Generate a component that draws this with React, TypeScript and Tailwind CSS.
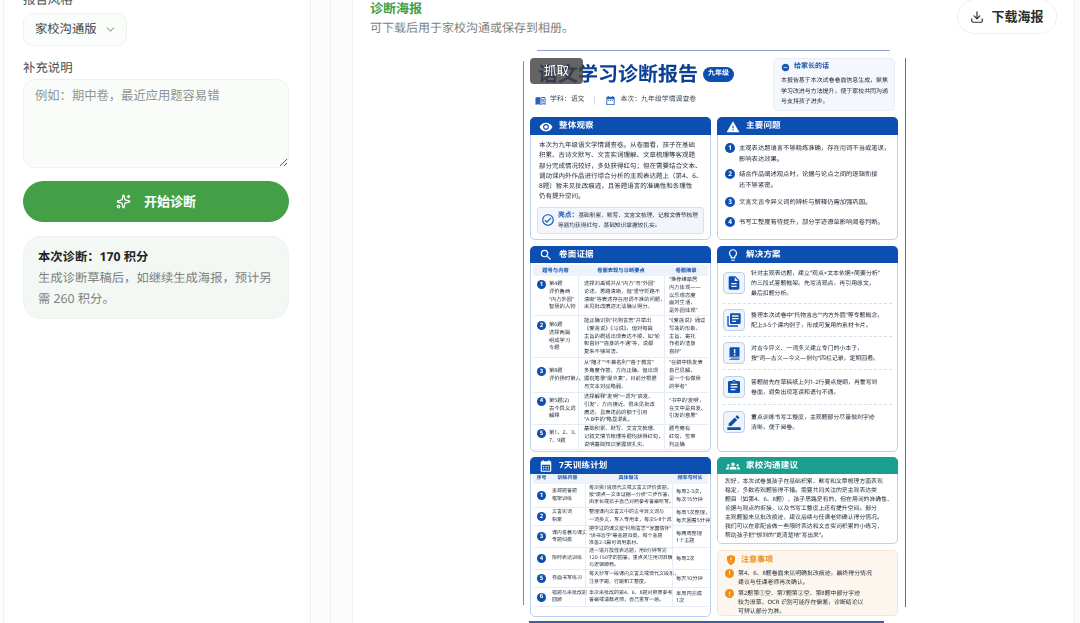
import { ChevronDown, Download, Sparkles } from "lucide-react";
import {
  MdAssignment,
  MdBorderColor,
  MdCalendarMonth,
  MdDateRange,
  MdDescription,
  MdGppMaybe,
  MdGroups,
  MdLibraryBooks,
  MdOutlineCheckCircle,
  MdOutlineLightbulb,
  MdOutlineMenuBook,
  MdRemoveCircle,
  MdSearch,
  MdVisibility,
  MdWarning,
} from "react-icons/md";
import type { ReactNode } from "react";

const evidenceRows = [
  { h: "h-[40px]", topic: "第4题\n评价鲁两\n“内方外圆”\n智慧的人物", note: "选择刘禹锡并从“内方”与“外圆”\n论述，思路清晰，但“坚守贬路不\n清晰”等表述存在用词不准的问题，\n未见批改痕迹无法确认得分。", quote: "“推荐维摩居\n内方体现——\n以乐观态度\n面对生活，\n是外圆体现”" },
  { h: "h-[42px]", topic: "第6题\n选择两篇\n组成学习\n专题", note: "能正确识别“托物言志”并举出\n《爱莲说》《马说》，但对每篇\n主旨的概括出现表达不顺，如“轮\n彰自好”“自身的不遇”等，说都\n复朱不够简洁。", quote: "“《爱莲说》通过\n写莲的形象，\n主旨，寄托\n作者的洁身\n自好”" },
  { h: "h-[35px]", topic: "第8题\n评价扬时第人", note: "从“隐才”“不慕名利”“善于教言”\n多角度作答，方向正确。但出现\n握祝笔录“提炎素”，目前分根据\n与文本对应略弱。", quote: "“在鲜中桃发表\n自己见解，\n是一个有做骨\n的学者”" },
  { h: "h-[32px]", topic: "第5题(2)\n古今异义词\n解释", note: "选择解释“发明”一词为“启发、\n引发”，方向接近。很未见批改\n痕迹，且表述前的额于引用\n“A B中的”略显混乱。", quote: "“书中的‘发明’，\n在文中是启发、\n引发的意思”" },
  { h: "h-[25px]", topic: "第1、2、3、\n7、9题", note: "基础积累、默写、文言文梳理、\n记叙文情节梳理等题均获得红勾，\n说明基础知识掌握较扎实。", quote: "题号旁有\n红勾，签章\n判正确" },
];

const planRows = [
  { h: "h-[24px]", name: "主观题答题\n框架训练", how: "每次挑1道现代文或文言文评价类题，\n按“观点—文本证据—分析”三步作答，\n由家长或孩子自己对照参考答案听写。", freq: "每周2-3次，\n每次15分钟" },
  { h: "h-[18px]", name: "文言实词\n积累", how: "整理课内文言文中的古今异义词与\n一词多义，写入专用本，每次5-8个词。", freq: "每周1次整理，\n每天回看5分钟" },
  { h: "h-[22px]", name: "课内名著与课文\n专题归类", how: "把学过的课文按“托物言志”“家国情怀”\n“读书治学”等主题归类，每个主题\n准备2-3篇可调用素材。", freq: "每两周整理\n1个主题" },
  { h: "h-[22px]", name: "限时表达训练", how: "选一道开放性表达题，用8分钟写完\n120-150字的回答，重点关注用词准确\n与逻辑顺畅。", freq: "每周2次" },
  { h: "h-[18px]", name: "卷面书写练习", how: "每天抄写一段课内文言文或现代文段落，\n注意字距、行距和工整度。", freq: "每天10分钟" },
  { h: "h-[19px]", name: "错题与未批改题\n回顾", how: "本次未批改的第4、6、8题对照原参考\n答案或请教老师，自己重写一遍。", freq: "本周内完成\n1次" },
];

const problems = [
  { h: "h-[26px]", text: "主观表达题语言不够精炼准确，存在用词不当或笔误，\n影响表达效果。" },
  { h: "h-[28px]", text: "结合作品阐述观点时，论据与论点之间的逻辑衔接\n还不够紧密。" },
  { h: "h-[20px]", text: "文言文古今异义词的辨析与解释仍需加强巩固。" },
  { h: "h-[20px]", text: "书写工整度有待提升，部分字迹潦草影响阅卷判断。" },
];

function BookAlert() {
  return (
    <svg viewBox="0 0 24 24" className="w-[15px] h-[15px]" fill="currentColor">
      <path d="M6 2h14v15H6.5A2.5 2.5 0 0 0 4 19.5V4a2 2 0 0 1 2-2z" />
      <path d="M6.5 18.5H20V20H6.5a.75.75 0 0 1 0-1.5z" />
      <rect x="11" y="5" width="2.4" height="6.5" fill="#eff4fc" />
      <rect x="11" y="13" width="2.4" height="2.4" fill="#eff4fc" />
      <rect x="4" y="21" width="16" height="1.2" />
    </svg>
  );
}

const solutions = [
  { icon: <MdDescription />, h: "h-[41px]", text: "针对主观表达题，建立“观点+文本依据+简要分析”\n的三段式答题框架。先写清观点，再引用原文，\n最后扣题分析。" },
  { icon: <MdLibraryBooks />, h: "h-[33px]", text: "整理本次试卷中“托物言志”“内方外圆”等专题概念，\n配上3-5个课内例子，形成可复用的素材卡片。" },
  { icon: <BookAlert />, h: "h-[33px]", text: "对古今异义、一词多义建立专门的小本子，\n按“词—古义—今义—例句”四栏记录，定期回看。" },
  { icon: <MdAssignment />, h: "h-[35px]", text: "答题前先在草稿纸上列1-2行要点提纲，再誊写到\n卷面，避免出现笔误和语句不通。" },
  { icon: <MdBorderColor />, h: "h-[34px]", text: "重点训练书写工整度，主观题部分尽量做到字迹\n清晰，便于阅卷。" },
];

function Num({ n, size = "w-[10px] h-[10px] text-[6.5px]" }: { n: number; size?: string }) {
  return (
    <span className={`${size} shrink-0 rounded-full bg-[#0d4fb0] text-white font-bold flex items-center justify-center`}>
      {n}
    </span>
  );
}

function CardHead({ icon, title, color = "bg-[#0d4fb0]", h = "h-[17px]" }: { icon: ReactNode; title: string; color?: string; h?: string }) {
  return (
    <div className={`${color} ${h} -mx-px -mt-px box-content pt-px rounded-t-[5px] flex items-center gap-[6px] pl-[9px] text-white`}>
      <span className="text-[14px] w-[14px] flex justify-center">{icon}</span>
      <span className="text-[8.5px] font-bold tracking-[0.2px]">{title}</span>
    </div>
  );
}

function Poster() {
  return (
    <div className="relative w-[383px] h-[573px] shrink-0 blur-[0.3px]">
      <div className="h-full bg-white border border-t-[#8fa5cc] border-b-2 border-b-[#3f5f96] border-l-[#6f8dc2] border-r-[#4f74b2] overflow-hidden text-[#1f2937]">
        {/* 头部 */}
        <div className="h-[66px] flex pl-[14px] pr-[10px]">
          <div className="flex-1 pt-[10px]">
            <div className="flex items-center gap-[5px] h-[26px]">
              <span className="text-[20px] font-bold text-[#0b3f94] leading-none">语文学习诊断报告</span>
              <span className="h-[15px] px-[5px] rounded-full bg-[#0d4fb0] text-white text-[7px] font-bold flex items-center">九年级</span>
            </div>
            <div className="mt-[7px] -ml-[3px] flex items-center h-[12px] text-[6.9px] text-[#3c4656]">
              <MdOutlineMenuBook className="text-[#2a63b8] text-[11px] mr-[4px]" />
              <span>学科：语文</span>
              <span className="w-px h-[9px] bg-[#d7dfeb] mx-[10px]" />
              <MdDateRange className="text-[#2a63b8] text-[11px] mr-[4px]" />
              <span>本次：九年级学情调查卷</span>
            </div>
          </div>
          <div className="w-[122px] h-[53px] mt-[7px] rounded-[5px] bg-[#f4f7fc] border border-[#e8eef7] px-[7px] pt-[3px]">
            <div className="flex items-center gap-[2px] text-[7px] font-bold text-[#1a56ad] h-[11px]">
              <MdRemoveCircle className="text-[9px]" />
              <span className="ml-[2px]">给家长的话</span>
            </div>
            <p className="text-[5.95px] leading-[10.5px] mt-[2px] whitespace-pre">{"本报告基于本次试卷卷面信息生成，聚焦\n学习改进与方法提升，便于家校共同沟通\n与支持孩子进步。"}</p>
          </div>
        </div>

        <div className="grid grid-cols-[181px_181px] gap-x-[6px] px-[6px]">
          {/* 左列 */}
          <div className="flex flex-col">
            <section className="h-[123px] rounded-[5px] border border-[#bcd0ec]">
              <CardHead icon={<MdVisibility />} title="整体观察" />
              <p className="text-[6.5px] leading-[10.3px] pl-[8px] pt-[5px] whitespace-pre">{"本次为九年级语文学情调查卷。从卷面看，孩子在基础\n积累、古诗文默写、文言实词理解、文章梳理等客观题\n部分完成情况较好，多处获得红勾；但在需要结合文本、\n调动课内外作品进行综合分析的主观表达题上（第4、6、\n8题）暂未见批改痕迹，且答题语言的准确性和条理性\n仍有提升空间。"}</p>
              <div className="mx-[6px] mt-[5px] h-[27px] rounded-[3px] bg-[#f2f6fc] border border-[#d4e1f3] flex items-center gap-[3px] pl-[3px]">
                <MdOutlineCheckCircle className="text-[#1a56ad] text-[14px] shrink-0" />
                <p className="text-[5.7px] leading-[10px] whitespace-pre"><b className="text-[#1a56ad] text-[6.8px]">亮点：</b>{"基础积累、默写、文言文梳理、记叙文情节梳理\n等题均获得红勾，基础知识掌握较扎实。"}</p>
              </div>
            </section>

            <section className="mt-[6px] h-[206px] rounded-[5px] border border-[#bcd0ec]">
              <CardHead icon={<MdSearch />} title="卷面证据" h="h-[16px]" />
              <div className="mx-[2px] mt-[2px] text-[5.3px] leading-[7.8px] text-[#2b3442]">
                <div className="grid grid-cols-[45px_86px_1fr] h-[11px] bg-[#eef3fb] text-[#1a56ad] font-bold text-center items-center">
                  <span>题号与内容</span>
                  <span>卷面表现与诊断要点</span>
                  <span>卷面摘录</span>
                </div>
                {evidenceRows.map((row, i) => (
                  <div key={i} className={`grid grid-cols-[45px_86px_1fr] ${row.h} border-b border-[#e6ecf5]`}>
                    <div className="flex items-center pl-[4px]">
                      <div className="flex gap-[3px]">
                        <Num n={i + 1} size="w-[9px] h-[9px] text-[6px]" />
                        <div className="whitespace-pre">{row.topic}</div>
                      </div>
                    </div>
                    <div className="flex items-center pl-[5px] border-l border-[#e6ecf5] whitespace-pre">{row.note}</div>
                    <div className="flex items-center pl-[4px] border-l border-[#e6ecf5] whitespace-pre">{row.quote}</div>
                  </div>
                ))}
              </div>
            </section>

            <section className="mt-[5px] h-[160px] rounded-[5px] border border-[#bcd0ec]">
              <CardHead icon={<MdCalendarMonth />} title="7天训练计划" h="h-[16px]" />
              <div className="mx-[2px] text-[5px] leading-[7.2px] text-[#2b3442]">
                <div className="grid grid-cols-[17px_35px_87px_1fr] h-[10px] bg-[#eef3fb] text-[#1a56ad] font-bold text-center items-center">
                  <span>序号</span>
                  <span>训练内容</span>
                  <span>具体做法</span>
                  <span>频率与时长</span>
                </div>
                {planRows.map((row, i) => (
                  <div key={i} className={`grid grid-cols-[17px_35px_87px_1fr] ${row.h} items-center border-b border-[#e6ecf5]`}>
                    <div className="flex justify-center"><Num n={i + 1} size="w-[9px] h-[9px] text-[6px]" /></div>
                    <div className="pl-[2px] whitespace-pre">{row.name}</div>
                    <div className="pl-[3px] h-full flex items-center border-l border-[#e6ecf5] whitespace-pre">{row.how}</div>
                    <div className="pl-[3px] h-full flex items-center border-l border-[#e6ecf5] whitespace-pre text-[5.2px]">{row.freq}</div>
                  </div>
                ))}
              </div>
            </section>
          </div>

          {/* 右列 */}
          <div className="flex flex-col">
            <section className="h-[123px] rounded-[5px] border border-[#bcd0ec]">
              <CardHead icon={<MdWarning />} title="主要问题" />
              <div className="pl-[7px] pt-[8px]">
                {problems.map((p, i) => (
                  <div key={i} className={`${p.h} flex gap-[4px] text-[6.3px] leading-[10.5px]`}>
                    <Num n={i + 1} />
                    <p className="whitespace-pre">{p.text}</p>
                  </div>
                ))}
              </div>
            </section>

            <section className="mt-[6px] h-[206px] rounded-[5px] border border-[#bcd0ec]">
              <CardHead icon={<MdOutlineLightbulb />} title="解决方案" h="h-[16px]" />
              <div className="px-[5px]">
                {solutions.map((s, i) => (
                  <div key={i} className={`${s.h} flex items-center gap-[6px] ${i < 4 ? "border-b border-dashed border-[#d7dfeb]" : ""}`}>
                    <span className="w-[22px] h-[22px] shrink-0 rounded-[4px] bg-[#eff4fc] border border-[#bcd0ec] text-[#0d4fb0] text-[16px] flex items-center justify-center">{s.icon}</span>
                    <p className="text-[5.9px] leading-[10px] whitespace-pre">{s.text}</p>
                  </div>
                ))}
              </div>
            </section>

            <section className="mt-[5px] h-[87px] rounded-[5px] border border-[#a8e0d8]">
              <CardHead icon={<MdGroups />} title="家校沟通建议" color="bg-[#1a9e8f]" h="h-[16px]" />
              <p className="text-[5.85px] leading-[8.95px] pl-[7px] pt-[3px] whitespace-pre">{"您好，本次试卷显孩子在基础积累、默写和文章梳理方面表现\n稳定，多数客观题答得不错。需要共同关注的是主观表达类\n题目（如第4、6、8题），孩子思路是有的，但在用词的准确性、\n论据与观点的衔接，以及书写工整度上还有提升空间。部分\n主观题暂未见批改痕迹，建议后续与任课老师确认得分情况。\n我们可以在家配合做一些限时表达和文言实词积累的小练习，\n帮助孩子把“想到的”更清楚地“写出来”。"}</p>
            </section>

            <section className="mt-[6px] h-[66px] rounded-[5px] border border-[#f9e4cc] bg-[#fdf6ee] px-[7px] pt-[3px]">
              <div className="flex items-center gap-[4px] text-[#ef8f17] text-[8px] font-bold h-[12px]">
                <MdGppMaybe className="text-[12px]" />
                注意事项
              </div>
              <div className="mt-[3px] flex flex-col gap-[3px] text-[5.9px] leading-[8.7px] whitespace-pre">
                <div className="flex gap-[4px] items-start">
                  <span className="w-[9px] h-[9px] shrink-0 rounded-full bg-[#ef8f17] text-white text-[6px] font-bold flex items-center justify-center">!</span>
                  <p>{"第4、6、8题卷面未见明确批改痕迹，最终得分情况\n建议与任课老师再次确认。"}</p>
                </div>
                <div className="flex gap-[4px] items-start">
                  <span className="w-[9px] h-[9px] shrink-0 rounded-full bg-[#ef8f17] text-white text-[6px] font-bold flex items-center justify-center">!</span>
                  <p>{"第2题第①空、第7题第②空、第8题中部分字迹\n较为潦草，OCR 识别可能存在偏差，诊断结论以\n可辨认部分为准。"}</p>
                </div>
              </div>
            </section>
          </div>
        </div>
      </div>

      {/* 四角白色遮罩 */}
      <span className="absolute left-0 top-0 w-[14px] h-[11px] bg-white rounded-br-[8px]" />
      <span className="absolute right-0 top-0 w-[16px] h-[8px] bg-white" />
      <span className="absolute left-0 bottom-0 w-[6px] h-[18px] bg-white" />
      <span className="absolute right-0 bottom-0 w-[7px] h-[16px] bg-white" />
      <span className="absolute right-0 bottom-0 w-[22px] h-[4px] bg-white" />

      <span className="absolute left-[7px] top-[8px] w-[53px] h-[26px] rounded-[4px] bg-[#3d3d3d]/80 text-white text-[12.5px] flex items-center justify-center">抓取</span>
    </div>
  );
}

export default function App() {
  return (
    <div className="w-[1080px] h-[623px] overflow-hidden flex bg-[#fbfcfb] font-['Noto_Sans','Noto_Sans_CJK_SC',sans-serif] [text-rendering:geometricPrecision]">
      {/* 左侧表单 */}
      <aside className="ml-[3px] w-[308px] h-full shrink-0 bg-white border-x border-[#eef0ef] pl-[19px] overflow-hidden">
        <div className="-mt-[10px]">
          <div className="text-[12.4px] leading-[20px] text-[#4a4f4c]">报告风格</div>
          <div className="mt-[3px] w-[104px] h-[33px] rounded-[10px] bg-[#fbfdfb] border border-[#eef2ee] flex items-center pl-[11px] gap-[7px] text-[12.3px] text-[#3f4441]">
            家校沟通版
            <ChevronDown className="w-[13px] h-[13px] text-[#a3a9a5]" />
          </div>
          <div className="mt-[12px] text-[12.4px] leading-[20px] text-[#4a4f4c]">补充说明</div>
          <textarea
            readOnly
            placeholder="例如：期中卷，最近应用题容易错"
            className="mt-[1px] block w-[266px] h-[89px] rounded-[12px] bg-[#f9fcf9] border border-[#eef2ee] px-[11px] pt-[6px] text-[12.3px] leading-[20px] placeholder:text-[#8f9491] outline-none"
          />
          <button className="mt-[13px] w-[266px] h-[41px] rounded-full bg-[#43a047] text-white text-[13px] font-bold flex items-center justify-center gap-[13px]">
            <Sparkles className="w-[15px] h-[15px]" />
            开始诊断
          </button>
          <div className="mt-[14px] w-[266px] h-[83px] rounded-[18px] bg-[#f4f8f5] border border-[#eef3ef] px-[14px] pt-[9px] text-[12.3px] leading-[21px]">
            <div className="font-bold text-[#1f2421]">本次诊断：170 积分</div>
            <p className="text-[#7c827e]">生成诊断草稿后，如继续生成海报，预计另需 260 积分。</p>
          </div>
        </div>
      </aside>

      {/* 右侧海报 */}
      <main className="ml-[19px] flex-1 h-full border-l border-[#f0f2f0] pl-[21px] overflow-hidden">
        <div className="h-full w-[723px] bg-white border-x border-[#eef0ef] pl-[17px]">
          <div className="flex h-[50px]">
            <div className="-mt-[2px] flex-1">
              <div className="text-[13px] leading-[20px] font-bold text-[#43a047]">诊断海报</div>
              <div className="text-[12px] leading-[20px] text-[#7c827e]">可下载后用于家校沟通或保存到相册。</div>
            </div>
            <button className="-mt-[1px] mr-[17px] w-[100px] h-[35px] rounded-full bg-white border border-[#eef0ef] text-[13px] font-bold text-[#2b2f2d] flex items-center justify-center gap-[7px]">
              <Download className="w-[14px] h-[14px]" />
              下载海报
            </button>
          </div>
          <div className="ml-[153px]">
            <Poster />
          </div>
        </div>
      </main>
    </div>
  );
}
